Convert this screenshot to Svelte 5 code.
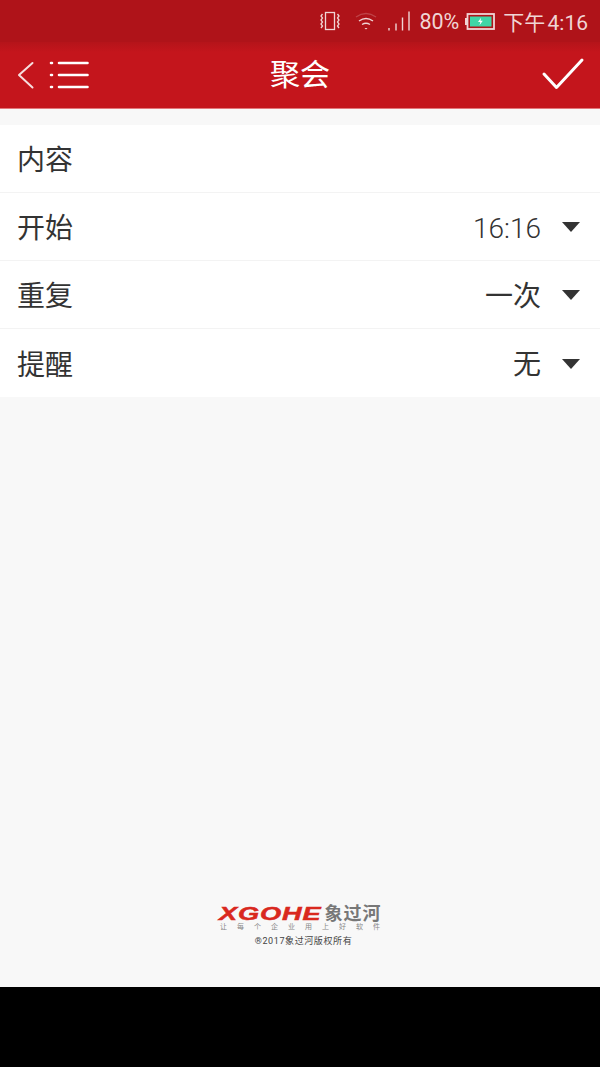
<script>
  const rows = [
    { label: '内容', value: '' },
    { label: '开始', value: '16:16', num: true },
    { label: '重复', value: '一次' },
    { label: '提醒', value: '无' }
  ];
</script>

<div class="screen">
  <div class="statusbar">
    <!-- vibrate -->
    <svg class="ic" width="22" height="20" viewBox="0 0 22 20" fill="none" stroke="#f0d5d5" stroke-width="1.3">
      <rect x="6.500" y="1.500" width="9" height="17" />
      <path d="M3.500 3 l-1.500 2 l1.500 2 l-1.500 2 l1.500 2 l-1.500 2 l1.500 2 l-1.500 2 M18.500 3 l1.500 2 l-1.500 2 l1.500 2 l-1.500 2 l1.500 2 l-1.500 2 l1.500 2" />
    </svg>
    <!-- wifi -->
    <svg class="ic wifi" width="22" height="18" viewBox="0 0 22 18" fill="none" stroke="#f0d5d5" stroke-width="1.400">
      <path d="M1 5 Q11 -2 21 5" opacity="0.25" />
      <path d="M4 9 Q11 4 18 9" />
      <path d="M7 12.500 Q11 10 15 12.500" />
      <path d="M9.500 16 L11 17.500 L12.500 16 Z" fill="#f0d5d5" stroke="none" />
    </svg>
    <!-- signal -->
    <svg class="ic signal" width="24" height="20" viewBox="0 0 24 20" stroke="#f0d5d5" stroke-width="1.400">
      <path d="M2 19.500 V17 M9 19.500 V12.500 M15.500 19.500 V6.500 M22 19.500 V0.500" />
    </svg>
    <span class="pct">80%</span>
    <!-- battery -->
    <svg class="ic battery" width="30" height="17" viewBox="0 0 30 17">
      <rect x="0" y="5" width="2" height="7" fill="#f0d5d5" />
      <rect x="2.500" y="1" width="26.500" height="15" fill="none" stroke="#f0d5d5" stroke-width="1.800" />
      <rect x="5" y="3.500" width="21.500" height="10" fill="#3fd6a6" />
      <path d="M16 4.800 L13 9 H15.300 L14.500 12.200 L17.800 7.800 H15.500 Z" fill="#fff" />
    </svg>
    <span class="clock">下午 4:16</span>
  </div>

  <header>
    <div class="left">
      <svg width="20" height="30" viewBox="0 0 20 30" fill="none" stroke="#f6dede" stroke-width="2" stroke-linecap="round" stroke-linejoin="round">
        <path d="M16.500 3 L3 15 L16.500 27.500" />
      </svg>
      <svg width="42" height="30" viewBox="0 0 42 30" fill="none" stroke="#fff" stroke-linecap="round">
        <path d="M2 3 H3 M2 15 H3 M2 27 H3" stroke-width="2.600" />
        <path d="M10 3 H38.500 M10 15 H38.500 M10 27 H38.500" stroke-width="2.600" />
      </svg>
    </div>
    <h1>聚会</h1>
    <svg class="check" width="44" height="38" viewBox="0 0 44 38" fill="none" stroke="#fff" stroke-width="3" stroke-linecap="round" stroke-linejoin="round">
      <path d="M3 17 L15.500 30.500 L41 3" />
    </svg>
  </header>

  <main>
    <ul class="form">
      {#each rows as row}
        <li>
          <span class="label">{row.label}</span>
          {#if row.value}
            <span class="value" class:num={row.num}>{row.value}</span>
            <span class="caret"></span>
          {/if}
        </li>
      {/each}
    </ul>

    <div class="brand">
      <div class="logo">
        <span class="en">XGOHE</span><span class="cn">象过河</span>
      </div>
      <div class="slogan">
        {#each '让每个企业用上好软件' as ch}<span>{ch}</span>{/each}
      </div>
      <div class="copy">®2017象过河版权所有</div>
    </div>
  </main>

  <div class="navbar"></div>
</div>

<style>
  :global(body) {
    margin: 0;
    background: #000;
  }

  .screen {
    width: 600px;
    height: 1067px;
    display: flex;
    flex-direction: column;
    font-family: "Roboto", "Noto Sans CJK SC", sans-serif;
    overflow: hidden;
  }

  .statusbar {
    height: 42px;
    box-sizing: border-box;
    background: #af1319;
    color: #f0d5d5;
    display: flex;
    align-items: center;
    justify-content: flex-end;
    padding: 0 12px 0 0;
    font-size: 21.500px;
  }

  .ic { display: block; }
  .wifi { margin-left: 14px; }
  .signal { margin-left: 10px; }
  .pct { margin-left: 8px; }
  .battery { margin-left: 6px; }
  .clock {
    margin-left: 8px;
    font-size: 21px;
    word-spacing: -3px;
  }

  header {
    height: 67px;
    box-sizing: border-box;
    background: linear-gradient(#b5141a 0, #c4151c 10px, #c4151c 100%);
    display: flex;
    align-items: center;
    justify-content: space-between;
    position: relative;
    padding: 0 16px;
    border-bottom: 1px solid #e2777b;
  }

  .left {
    display: flex;
    align-items: center;
    gap: 13px;
  }

  h1 {
    position: absolute;
    left: 0;
    right: 0;
    margin: 0;
    text-align: center;
    color: #fff;
    font-size: 30px;
    font-weight: 400;
    line-height: 66px;
  }

  .check {
    margin-right: -1px;
    margin-top: 2px;
  }

  main {
    flex: 1;
    background: #f8f8f8;
    padding-top: 16px;
    display: flex;
    flex-direction: column;
  }

  .form {
    list-style: none;
    margin: 0;
    padding: 0;
    background: #fff;
  }

  li {
    height: 68px;
    box-sizing: border-box;
    display: flex;
    align-items: center;
    padding: 0 20px 0 17px;
    color: #333;
    font-size: 28px;
    border-bottom: 1px solid #f3f3f3;
  }

  li:last-child { border-bottom: none; }

  .label {
    flex: 1;
    margin-bottom: 2px;
  }

  li:last-child .label { margin-bottom: 1px; }

  .value {
    margin-right: 21px;
    margin-bottom: 2px;
  }

  .value.num {
    margin-bottom: 0;
    margin-top: 4px;
    font-weight: 300;
  }

  .caret {
    width: 0;
    height: 0;
    margin-top: 1px;
    border-left: 9px solid transparent;
    border-right: 9px solid transparent;
    border-top: 10px solid #333;
  }

  .brand {
    margin-top: auto;
    padding-bottom: 40px;
    display: flex;
    flex-direction: column;
    align-items: center;
  }

  .logo {
    display: flex;
    align-items: center;
    height: 20px;
    margin-top: 4px;
  }

  .en {
    color: #d9281e;
    font: italic 700 19px/20px "Liberation Sans", sans-serif;
    -webkit-text-stroke: 0.5px #d9281e;
    letter-spacing: 0.6px;
    transform: scaleX(1.43);
    transform-origin: left;
    width: 106px;
  }

  .cn {
    color: #777;
    font-size: 18px;
    font-weight: 700;
    letter-spacing: 1px;
    line-height: 20px;
  }

  .slogan {
    width: 160px;
    display: flex;
    justify-content: space-between;
    color: #888;
    font-size: 7px;
    line-height: 9px;
    margin-top: -1px;
  }

  .copy {
    color: #444;
    font-size: 9px;
    line-height: 12px;
    margin-top: 3px;
    margin-left: 7px;
    letter-spacing: 0.600px;
  }

  .navbar {
    height: 80px;
    background: #000;
  }
</style>
